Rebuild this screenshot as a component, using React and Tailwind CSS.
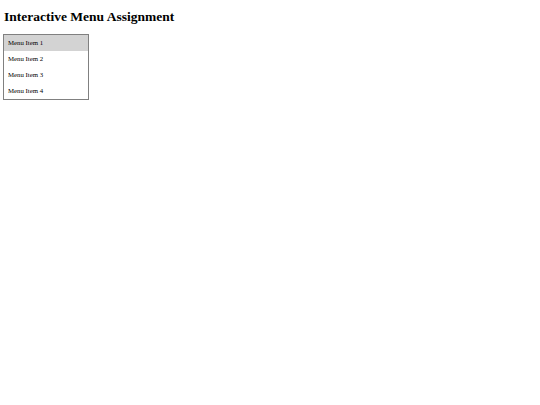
const items = ['Menu Item 1', 'Menu Item 2', 'Menu Item 3', 'Menu Item 4'];

export default function App() {
  return (
    <div className="min-h-screen bg-white pl-[3px] pt-[9px] font-['Liberation_Serif',serif] text-black">
      <h1 className="ml-[1px] text-[13.5px] font-bold leading-[15px]">Interactive Menu Assignment</h1>

      <ul className="mt-[10px] w-[86px] border border-[#808080]">
        {items.map((item, i) => (
          <li
            key={item}
            className={`flex h-[16px] items-center pl-[4px] text-[6.8px] ${i === 0 ? 'bg-[#d3d3d3]' : ''}`}
          >
            {item}
          </li>
        ))}
      </ul>
    </div>
  );
}
